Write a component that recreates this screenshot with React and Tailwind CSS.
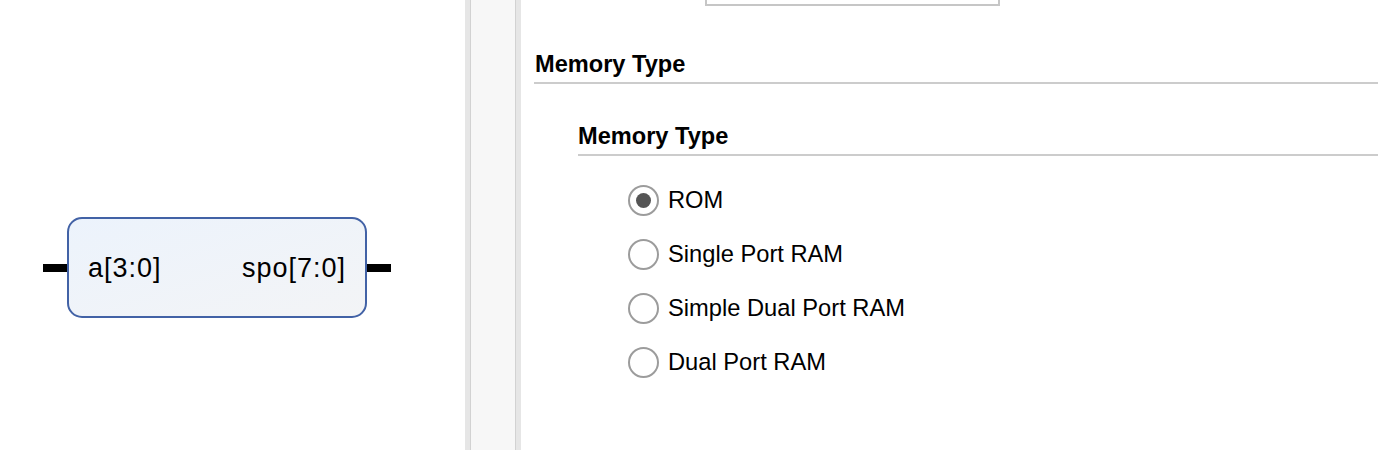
import React from "react";

const font = { fontFamily: '"Liberation Sans", Arial, sans-serif' };

function Radio({ label, checked }) {
  return (
    <div className="flex h-[54px] items-center">
      <div className="flex h-[31px] w-[31px] items-center justify-center rounded-full border-2 border-[#9c9c9c] bg-white">
        {checked && <div className="h-[15px] w-[15px] rounded-full bg-[#555555]" />}
      </div>
      <span className="ml-[9px] text-[23.7px] leading-[28px] text-black">{label}</span>
    </div>
  );
}

export default function App() {
  return (
    <div
      className="flex h-[450px] w-[1378px] overflow-hidden bg-white font-['Liberation_Sans',Arial,sans-serif]"
      style={font}
    >
      {/* Left: block diagram */}
      <div className="w-[465px] shrink-0 pl-[43px] pt-[217px]">
        <div className="flex items-center">
          <div className="h-[8px] w-[24px] bg-black" />
          <div className="flex h-[101px] w-[300px] items-center justify-between rounded-[15px] border-2 border-[#4262a6] bg-linear-to-br from-[#ecf3fc] to-[#f3f4f6] pl-[19px] pr-[19px]">
            <span className="text-[27px] leading-[30px] tracking-[1px] text-black">a[3:0]</span>
            <span className="text-[27px] leading-[30px] tracking-[1px] text-black">spo[7:0]</span>
          </div>
          <div className="h-[8px] w-[24px] bg-black" />
        </div>
      </div>

      {/* Divider */}
      <div className="flex h-full w-[56px] shrink-0">
        <div className="h-full w-[5px] bg-[#e6e6e6]" />
        <div className="h-full w-px bg-[#d2d2d2]" />
        <div className="h-full w-[44px] bg-[#f7f7f7]" />
        <div className="h-full w-px bg-[#d2d2d2]" />
        <div className="h-full w-[5px] bg-[#e6e6e6]" />
      </div>

      {/* Right: settings */}
      <div className="flex min-w-0 flex-1 flex-col">
        <div className="ml-[184px] h-[6px] w-[295px] border-2 border-t-0 border-[#c6c6c6] bg-white" />
        <div className="ml-[13px] mt-[44px] border-b-2 border-[#cccccc] pb-[4px] pl-px">
          <div className="text-[23.6px] font-bold leading-[28px] text-black">Memory Type</div>
        </div>
        <div className="ml-[57px] mt-[38px] border-b-2 border-[#cccccc] pb-[4px]">
          <div className="text-[23.6px] font-bold leading-[28px] text-black">Memory Type</div>
        </div>
        <div className="ml-[107px] mt-[17px] flex flex-col">
          <Radio label="ROM" checked />
          <Radio label="Single Port RAM" />
          <Radio label="Simple Dual Port RAM" />
          <Radio label="Dual Port RAM" />
        </div>
      </div>
    </div>
  );
}
